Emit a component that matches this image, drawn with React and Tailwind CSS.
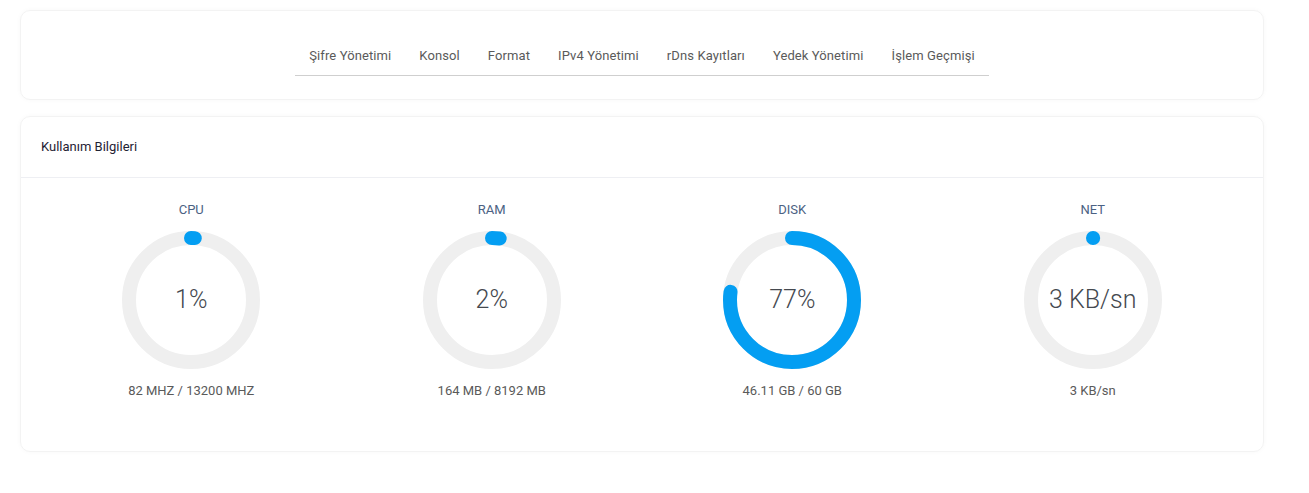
import React from "react";

const tabs = [
  "Şifre Yönetimi",
  "Konsol",
  "Format",
  "IPv4 Yönetimi",
  "rDns Kayıtları",
  "Yedek Yönetimi",
  "İşlem Geçmişi",
];

const usage = [
  { label: "CPU", value: "1%", percent: 1, detail: "82 MHZ / 13200 MHZ" },
  { label: "RAM", value: "2%", percent: 2, detail: "164 MB / 8192 MB" },
  { label: "DISK", value: "77%", percent: 77, detail: "46.11 GB / 60 GB" },
  { label: "NET", value: "3 KB/sn", percent: 0.05, detail: "3 KB/sn" },
];

const Ring = ({ percent, value }) => {
  const r = 62;
  const c = 2 * Math.PI * r;
  const len = (c * percent) / 100;
  return (
    <div className="relative w-[138px] h-[138px]">
      <svg width="138" height="138" viewBox="0 0 138 138">
        <circle cx="69" cy="69" r={r} fill="none" stroke="#efefef" strokeWidth="14" />
        <circle
          cx="69"
          cy="69"
          r={r}
          fill="none"
          stroke="#049ef2"
          strokeWidth="14"
          strokeLinecap="round"
          strokeDasharray={`${len} ${c}`}
          transform="rotate(-90 69 69)"
        />
      </svg>
      <div className="absolute inset-0 flex items-center justify-center text-[25px] font-light text-[#45494f]">
        {value}
      </div>
    </div>
  );
};

export default function App() {
  return (
    <div
      className="bg-white min-h-[493px] pt-[10px] pl-[20px]"
      style={{ fontFamily: "Roboto, 'Noto Sans', sans-serif" }}
    >
      <div className="w-[1244px] h-[90px] rounded-[10px] border border-[#f3f3f3] shadow-[0_0_5px_rgba(0,0,0,0.03)] flex justify-center pt-[25px]">
        <div className="flex h-[40px] border-b border-[#cfcfcf]">
          {tabs.map((t) => (
            <div
              key={t}
              className="px-[14px] h-full flex items-center text-[13px] text-[#5a5a5a] tracking-[0.1px]"
            >
              {t}
            </div>
          ))}
        </div>
      </div>

      <div className="mt-[16px] w-[1244px] h-[336px] rounded-[10px] border border-[#f3f3f3] shadow-[0_0_5px_rgba(0,0,0,0.03)]">
        <div className="h-[61px] border-b border-[#eeeff3] flex items-center pl-[20px] text-[13px] text-[#1f2233]">
          Kullanım Bilgileri
        </div>
        <div className="grid grid-cols-4 px-[20px] pt-[22px]">
          {usage.map((u) => (
            <div key={u.label} className="flex flex-col items-center">
              <div className="h-[20px] leading-[20px] text-[13px] text-[#4b6283]">
                {u.label}
              </div>
              <div className="mt-[11px]">
                <Ring percent={u.percent} value={u.value} />
              </div>
              <div className="mt-[12px] h-[20px] leading-[20px] text-[13px] text-[#5a5a5a]">
                {u.detail}
              </div>
            </div>
          ))}
        </div>
      </div>
    </div>
  );
}
